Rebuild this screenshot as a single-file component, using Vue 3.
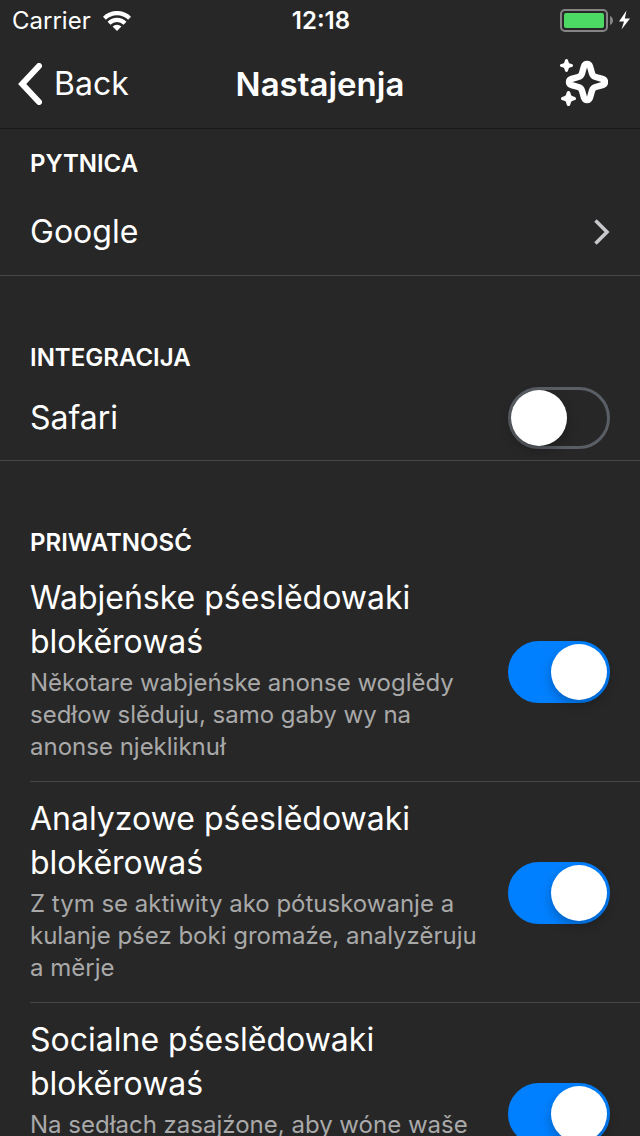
<script setup>
import { ref } from 'vue'

const safari = ref(false)

const trackers = ref([
  {
    id: 'ads',
    title: 'Wabjeńske pśeslědowaki blokěrowaś',
    detail: 'Někotare wabjeńske anonse woglědy sedłow slěduju, samo gaby wy na anonse njekliknuł',
    on: true
  },
  {
    id: 'analytics',
    title: 'Analyzowe pśeslědowaki blokěrowaś',
    detail: 'Z tym se aktiwity ako pótuskowanje a kulanje pśez boki gromaźe, analyzěruju a měrje',
    on: true
  },
  {
    id: 'social',
    title: 'Socialne pśeslědowaki blokěrowaś',
    detail: 'Na sedłach zasajźone, aby wóne waše',
    on: true
  }
])
</script>

<template>
  <div class="screen">
    <div class="status">
      <div class="status-left">
        <span>Carrier</span>
        <svg class="wifi" viewBox="0 0 28 20" aria-hidden="true">
          <g fill="none" stroke="#fff" stroke-width="4.200">
            <path d="M1.400 7.200a18 18 0 0 1 25.200 0" />
            <path d="M6 12.200a11.400 11.400 0 0 1 16 0" />
          </g>
          <path d="M14 20l-4.400-4.600a6.400 6.400 0 0 1 8.800 0z" fill="#fff" />
        </svg>
      </div>
      <time class="clock">12:18</time>
      <div class="status-right">
        <svg class="battery" viewBox="0 0 70 23" aria-hidden="true">
          <rect x="1" y="1" width="46" height="21" rx="4" fill="none" stroke="#858585" stroke-width="2" />
          <rect x="4" y="4" width="40" height="15" rx="2" fill="#4cd964" />
          <path d="M50 7c4 1.500 4 7.500 0 9z" fill="#858585" />
          <path d="M66.500 1.500L59 12.500h5L61.500 20.500 70 9.500h-5.200z" fill="#fff" />
        </svg>
      </div>
    </div>

    <header class="nav">
      <button class="back" type="button">
        <svg class="back-icon" viewBox="0 0 24 42" aria-hidden="true">
          <path d="M21 3L4.200 21 21 39" fill="none" stroke="#fff" stroke-width="6" stroke-linecap="round" />
        </svg>
        <span>Back</span>
      </button>
      <h1 class="title">Nastajenja</h1>
      <button class="sparkle" type="button" aria-label="Sparkles">
        <svg class="sparkle-icon" viewBox="0 0 48 50" aria-hidden="true">
          <path
            d="M27 5c1.700 0 2.600 1 3.100 2.700l1.900 6.600c.6 2.200 1.500 3.100 3.700 3.700l6.600 1.900c1.700.5 2.700 1.400 2.700 3.100s-1 2.600-2.700 3.100l-6.600 1.900c-2.200.6-3.100 1.500-3.700 3.700l-1.900 6.600c-.5 1.700-1.400 2.700-3.100 2.700s-2.600-1-3.100-2.700l-1.900-6.600c-.6-2.200-1.500-3.100-3.700-3.700l-6.600-1.900c-1.700-.5-2.700-1.400-2.700-3.100s1-2.600 2.700-3.100l6.600-1.900c2.200-.6 3.100-1.500 3.700-3.700l1.900-6.600c.5-1.700 1.400-2.700 3.100-2.700z"
            fill="none" stroke="#fff" stroke-width="6.400" stroke-linejoin="round"
          />
          <path d="M6.500 0c1.300 0 1.500 1 1.800 2.200.4 1.700.8 2.100 2.500 2.500 1.200.3 2.200.5 2.200 1.800s-1 1.500-2.200 1.800c-1.700.4-2.100.8-2.500 2.500-.3 1.200-.5 2.200-1.800 2.200s-1.500-1-1.800-2.200c-.4-1.700-.8-2.100-2.500-2.500C1 8 0 7.800 0 6.500s1-1.500 2.200-1.800c1.700-.4 2.100-.8 2.500-2.500C5 1 5.200 0 6.500 0z" fill="#fff" />
          <path d="M8.500 32c1.500 0 1.700 1.200 2.100 2.600.5 1.900.9 2.300 2.800 2.800 1.400.4 2.600.6 2.600 2.100s-1.200 1.700-2.600 2.100c-1.900.5-2.300.9-2.800 2.800-.4 1.400-.6 2.600-2.100 2.600s-1.700-1.200-2.100-2.600c-.5-1.900-.9-2.300-2.800-2.800C2.200 41.200 1 41 1 39.500s1.200-1.700 2.600-2.100c1.900-.5 2.300-.9 2.800-2.800.4-1.400.6-2.600 2.100-2.600z" fill="#fff" />
        </svg>
      </button>
    </header>

    <main class="content">
      <section class="group first">
        <h2 class="heading">PYTNICA</h2>
        <a class="row link" href="#google">
          <span class="label">Google</span>
          <svg class="chevron" viewBox="0 0 16 26" aria-hidden="true">
            <path d="M1.500 1.500L13 13 1.500 24.500" fill="none" stroke="#c7c7cc" stroke-width="3.600" />
          </svg>
        </a>
      </section>

      <section class="group">
        <h2 class="heading">INTEGRACIJA</h2>
        <div class="row">
          <label class="label" for="safari">Safari</label>
          <input id="safari" v-model="safari" class="switch" type="checkbox" role="switch" />
        </div>
      </section>

      <section class="group">
        <h2 class="heading">PRIWATNOSĆ</h2>
        <div v-for="t in trackers" :key="t.id" class="item">
          <div class="text">
            <label class="label" :for="t.id">{{ t.title }}</label>
            <p :id="t.id + '-detail'" class="detail">{{ t.detail }}</p>
          </div>
          <input :id="t.id" v-model="t.on" class="switch" type="checkbox" role="switch" :aria-describedby="t.id + '-detail'" />
        </div>
      </section>
    </main>
  </div>
</template>

<style>
body {
  background: #272727;
}
</style>

<style scoped>
.screen {
  display: flex;
  flex-direction: column;
  height: 100vh;
  overflow: hidden;
  background: #272727;
  color: #fff;
  font-family: Inter, "Liberation Sans", sans-serif;
  font-size: 32px;
  line-height: 44px;
}

.screen * {
  box-sizing: border-box;
}

.status {
  flex: none;
  display: grid;
  grid-template-columns: 1fr auto 1fr;
  align-items: center;
  height: 40px;
  padding: 1px 10px 0 12px;
  font-size: 24px;
  line-height: 33px;
}

.status-left {
  display: flex;
  align-items: center;
  gap: 12px;
}

.wifi {
  width: 28px;
  height: 20px;
}

.clock {
  font-weight: 600;
}

.status-right {
  display: flex;
  justify-content: flex-end;
}

.battery {
  width: 70px;
  height: 23px;
}

.nav {
  flex: none;
  display: grid;
  grid-template-columns: 1fr auto 1fr;
  align-items: center;
  height: 89px;
  padding: 0 18px;
  border-bottom: 1px solid #191919;
}

button {
  display: flex;
  align-items: center;
  padding: 0;
  border: 0;
  background: none;
  color: inherit;
  font: inherit;
}

.back {
  justify-self: start;
  gap: 12px;
}

.back-icon {
  width: 24px;
  height: 42px;
}

.title {
  margin: 0;
  font-size: 33px;
  font-weight: 600;
}

.sparkle {
  justify-self: end;
  margin-right: 14px;
}

.sparkle-icon {
  width: 48px;
  height: 50px;
}

.content {
  flex: 1;
  min-height: 0;
  overflow-y: auto;
  scrollbar-width: none;
}

.group {
  padding-top: 66px;
}

.group.first {
  padding-top: 19px;
}

.heading {
  margin: 0 0 2px;
  padding: 0 30px;
  font-size: 24px;
  font-weight: 600;
  line-height: 32px;
}

.row {
  display: flex;
  align-items: center;
  justify-content: space-between;
  min-height: 85px;
  padding: 0 30px;
  border-bottom: 1px solid #464646;
  color: inherit;
  text-decoration: none;
}

.link {
  min-height: 94px;
  padding-top: 7px;
}

.chevron {
  width: 16px;
  height: 26px;
}

.label {
  display: block;
}

.item {
  display: flex;
  align-items: center;
  gap: 24px;
  min-height: 221px;
  margin-left: 30px;
  padding: 2px 30px 0 0;
  border-bottom: 1px solid #464646;
}

.text {
  flex: 1;
  align-self: flex-start;
  min-width: 0;
  padding: 13px 0 17px;
}

.detail {
  margin: 3px 0 0;
  color: #a9a9a9;
  font-size: 24px;
  line-height: 32px;
}

.switch {
  flex: none;
  appearance: none;
  display: flex;
  align-items: center;
  width: 102px;
  height: 62px;
  margin: 0;
  border: 3px solid #5a5f66;
  border-radius: 31px;
}

.switch::before {
  content: "";
  width: 56px;
  height: 56px;
  border-radius: 50%;
  background: #fff;
  box-shadow: 0 5px 12px rgba(0, 0, 0, 0.25);
}

.switch:checked {
  justify-content: flex-end;
  border-color: #0080ff;
  background: #0080ff;
}
</style>
